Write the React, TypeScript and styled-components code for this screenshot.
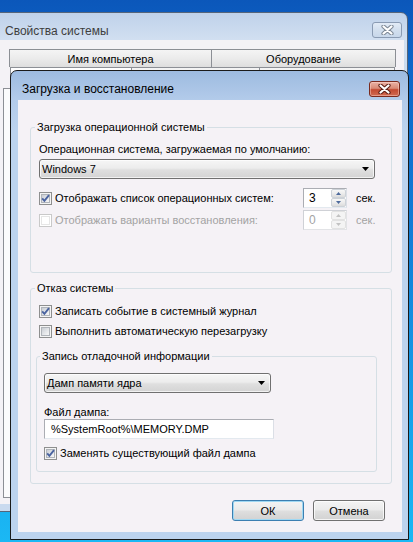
import React from "react";
import styled, { createGlobalStyle } from "styled-components";

const GlobalStyle = createGlobalStyle`
  html, body { margin: 0; padding: 0; }
  body {
    width: 413px;
    height: 542px;
    overflow: hidden;
    font-family: "Liberation Sans", Arial, sans-serif;
    font-size: 11px;
    line-height: 13px;
    color: #000;
    background: #1a9fe8;
  }
`;

const Desktop = styled.div`
  position: relative;
  width: 413px;
  height: 542px;
  overflow: hidden;
  background: linear-gradient(180deg, #0b57ba 0%, #0e66c8 12%, #127fd8 45%, #17a5ec 80%, #1bb8f4 100%);
`;

/* ---------- outer window: Свойства системы ---------- */
const OuterWindow = styled.div`
  position: absolute;
  left: -4px;
  top: 12px;
  width: 412px;
  height: 500px;
  box-sizing: border-box;
  border: 1px solid #56657a;
  border-radius: 0 7px 0 0;
  background: linear-gradient(180deg, #bfd2ea 0px, #d2e0f1 28px, #cadbef 60px, #c9daef 100%);
  display: flex;
  flex-direction: column;
`;

const OuterTitleBar = styled.div`
  height: 27px;
  flex: none;
  display: flex;
  align-items: flex-start;
  padding-left: 8px;
`;

const OuterTitle = styled.div`
  margin-top: 11px;
  font-size: 12px;
  line-height: 14px;
  color: #3e3e3e;
`;

const InactiveClose = styled.div`
  margin-left: auto;
  margin-right: 5px;
  margin-top: 9px;
  width: 30px;
  height: 16px;
  box-sizing: border-box;
  border: 1px solid #8a9bb3;
  border-radius: 3px;
  background: linear-gradient(180deg, #e2ebf6 0%, #d2dfee 50%, #c8d7ea 100%);
  display: grid;
  place-items: center;
`;

const OuterClient = styled.div`
  flex: 1;
  margin: 0 3px 7px 3px;
  background: #f4f2f6;
  padding: 9px 0 0 3px;
  display: flex;
  flex-direction: column;
`;

const TabRow = styled.div<{ $pad: number }>`
  display: flex;
  padding-left: ${(p) => p.$pad}px;
  flex: none;
`;

const Tab = styled.div<{ $w: number; $h: number; $selected?: boolean }>`
  width: ${(p) => p.$w}px;
  height: ${(p) => p.$h}px;
  box-sizing: border-box;
  border: 1px solid #8c8f95;
  border-bottom: none;
  background: ${(p) =>
    p.$selected ? "#ffffff" : "linear-gradient(180deg, #f4f4f4 0%, #ebebeb 50%, #dedede 100%)"};
  display: flex;
  align-items: center;
  justify-content: center;
  font-size: 11px;
  padding-top: 1px;
  & + & {
    border-left: none;
  }
`;

const TabPanel = styled.div`
  flex: 1;
  margin-right: 7px;
  margin-bottom: 6px;
  border: 1px solid #8c8f95;
  background: #fbfbfc;
`;

/* ---------- dialog: Загрузка и восстановление ---------- */
const Dialog = styled.div`
  position: absolute;
  left: 10px;
  top: 70px;
  width: 399px;
  height: 470px;
  box-sizing: border-box;
  border: 1px solid #1a1a1a;
  border-radius: 7px 7px 0 0;
  background: linear-gradient(180deg, #9dbbe0 0px, #b3cbea 29px, #bcd3ee 60px, #bcd3ee 100%);
  display: flex;
  flex-direction: column;
`;

const DialogTitleBar = styled.div`
  height: 29px;
  flex: none;
  display: flex;
  align-items: flex-start;
  padding-left: 11px;
`;

const DialogTitle = styled.div`
  margin-top: 11px;
  font-size: 12px;
  line-height: 14px;
  color: #000;
`;

const RedClose = styled.div`
  margin-left: auto;
  margin-right: 8px;
  margin-top: 10px;
  width: 31px;
  height: 16px;
  box-sizing: border-box;
  border: 1px solid #7a2a1e;
  border-radius: 3px;
  background: linear-gradient(180deg, #eab3a6 0%, #d98a76 45%, #c34a31 55%, #d06a52 100%);
  box-shadow: inset 0 0 0 1px rgba(255, 220, 210, 0.45);
  display: grid;
  place-items: center;
`;

const DialogClient = styled.div`
  flex: 1;
  margin: 0 6px 7px 7px;
  background: #f5f2f6;
  padding-top: 21px;
  display: flex;
  flex-direction: column;
`;

const Group = styled.fieldset<{ $pad: number; $w?: number; $mt?: number; $ml?: number; $pb: number }>`
  margin: ${(p) => p.$mt ?? 0}px 0 0 ${(p) => p.$ml ?? 0}px;
  ${(p) => (p.$w ? `width: ${p.$w}px;` : "")}
  box-sizing: border-box;
  border: 1px solid #d5dfe5;
  border-radius: 3px;
  padding: 0 0 ${(p) => p.$pb}px ${(p) => p.$pad}px;
  min-width: 0;
  display: flex;
  flex-direction: column;
  align-items: flex-start;
`;

const Legend = styled.legend`
  padding: 0 2px;
  margin-left: -4px;
  font-size: 11px;
  line-height: 13px;
`;

const Label = styled.div<{ $mt: number; $disabled?: boolean }>`
  margin-top: ${(p) => p.$mt}px;
  line-height: 13px;
  color: ${(p) => (p.$disabled ? "#a3a3a3" : "#000")};
  white-space: nowrap;
`;

const Combo = styled.div<{ $w: number; $mt: number }>`
  margin-top: ${(p) => p.$mt}px;
  width: ${(p) => p.$w}px;
  height: 20px;
  box-sizing: border-box;
  border: 1px solid #707070;
  border-radius: 3px;
  background: linear-gradient(180deg, #f6f6f6 0%, #ececec 45%, #dfdfdf 55%, #d3d3d3 100%);
  box-shadow: inset 0 0 0 1px rgba(255, 255, 255, 0.7);
  display: flex;
  align-items: center;
  padding: 0 5px 0 2px;
`;

const ComboText = styled.span`
  flex: 1;
  white-space: nowrap;
`;

const CheckRow = styled.div<{ $mt: number }>`
  margin-top: ${(p) => p.$mt}px;
  height: 20px;
  display: flex;
  align-items: center;
`;

const SpinRow = styled.div<{ $mt: number }>`
  margin-top: ${(p) => p.$mt}px;
  height: 20px;
  display: grid;
  grid-template-columns: 264px 44px auto;
  align-items: center;
`;

const CheckLabel = styled.label<{ $disabled?: boolean }>`
  display: flex;
  align-items: center;
  gap: 3px;
  white-space: nowrap;
  color: ${(p) => (p.$disabled ? "#a3a3a3" : "#000")};
`;

const Box = styled.span<{ $disabled?: boolean }>`
  position: relative;
  flex: none;
  width: 13px;
  height: 13px;
  box-sizing: border-box;
  border: 1px solid ${(p) => (p.$disabled ? "#c9c9c9" : "#8e8f8f")};
  background: ${(p) => (p.$disabled ? "#ffffff" : "#f4f4f4")};
  display: grid;
  place-items: center;
`;

const BoxInner = styled.span<{ $disabled?: boolean }>`
  width: 9px;
  height: 9px;
  box-sizing: border-box;
  border: 1px solid ${(p) => (p.$disabled ? "#e6e6e6" : "#b0b4ba")};
  background: ${(p) =>
    p.$disabled ? "#ffffff" : "linear-gradient(135deg, #c9cdd3 0%, #e4e6e9 55%, #f7f7f7 100%)"};
`;

const CheckSvg = styled.svg`
  position: absolute;
  left: 0;
  top: 0;
  width: 11px;
  height: 11px;
`;

const Spinner = styled.div<{ $disabled?: boolean }>`
  width: 44px;
  height: 20px;
  box-sizing: border-box;
  border: 1px solid ${(p) => (p.$disabled ? "#cfd1d6" : "#abadb3")};
  border-bottom-color: ${(p) => (p.$disabled ? "#e2e3e6" : "#e3e9ef")};
  border-right-color: ${(p) => (p.$disabled ? "#e2e3e6" : "#dbdfe6")};
  background: #fff;
  display: flex;
  align-items: center;
  padding: 0 0 0 5px;
  color: ${(p) => (p.$disabled ? "#a3a3a3" : "#000")};
  font-size: 12px;
`;

const SpinValue = styled.span`
  flex: 1;
`;

const SpinButtons = styled.div`
  width: 15px;
  height: 18px;
  display: flex;
  flex-direction: column;
`;

const SpinBtn = styled.div<{ $disabled?: boolean }>`
  flex: 1;
  box-sizing: border-box;
  border: 1px solid ${(p) => (p.$disabled ? "#e2e2e2" : "#cdd2d8")};
  border-radius: 2px;
  background: ${(p) =>
    p.$disabled ? "#f4f4f4" : "linear-gradient(180deg, #f7f7f7 0%, #ececec 50%, #dcdcdc 100%)"};
  display: grid;
  place-items: center;
`;

const Sec = styled.span<{ $disabled?: boolean }>`
  margin-left: 9px;
  color: ${(p) => (p.$disabled ? "#a3a3a3" : "#000")};
`;

const TextBox = styled.div<{ $w: number }>`
  width: ${(p) => p.$w}px;
  height: 20px;
  box-sizing: border-box;
  border: 1px solid #abadb3;
  border-bottom-color: #e3e9ef;
  border-right-color: #dbdfe6;
  background: #fff;
  display: flex;
  align-items: center;
  padding-left: 6px;
  white-space: nowrap;
`;

const ButtonRow = styled.div`
  margin-top: 16px;
  display: flex;
  justify-content: flex-end;
  gap: 9px;
  padding-right: 17px;
`;

const Button = styled.button<{ $default?: boolean }>`
  width: 72px;
  height: 21px;
  box-sizing: border-box;
  border: 1px solid ${(p) => (p.$default ? "#3c7fb1" : "#707070")};
  border-radius: 3px;
  background: linear-gradient(180deg, #f4f4f4 0%, #ebebeb 45%, #dedede 55%, #d2d2d2 100%);
  box-shadow: ${(p) =>
    p.$default ? "inset 0 0 0 1px #9fd8f3" : "inset 0 0 0 1px rgba(255,255,255,0.75)"};
  font-family: "Liberation Sans", Arial, sans-serif;
  font-size: 11px;
  color: #000;
  padding: 0;
  display: grid;
  place-items: center;
`;

/* ---------- small drawings ---------- */
const CloseGlyph: React.FC<{ outline: string }> = ({ outline }) => (
  <svg width="13" height="10" viewBox="0 0 13 10">
    <path d="M2.5 1.5 L10.5 8.5 M10.5 1.5 L2.5 8.5" stroke={outline} strokeWidth="4.2" strokeLinecap="round" fill="none" />
    <path d="M2.5 1.5 L10.5 8.5 M10.5 1.5 L2.5 8.5" stroke="#ffffff" strokeWidth="2.2" strokeLinecap="round" fill="none" />
  </svg>
);

const ComboArrow = () => (
  <svg width="7" height="4" viewBox="0 0 7 4">
    <polygon points="0,0 7,0 3.5,4" fill="#000" />
  </svg>
);

const SpinArrow: React.FC<{ up?: boolean; disabled?: boolean }> = ({ up, disabled }) => (
  <svg width="5" height="3" viewBox="0 0 5 3">
    <polygon points={up ? "0,3 5,3 2.5,0" : "0,0 5,0 2.5,3"} fill={disabled ? "#c2c2c2" : "#4d6a9c"} />
  </svg>
);

const Checkbox: React.FC<{ checked?: boolean; disabled?: boolean }> = ({ checked, disabled }) => (
  <Box $disabled={disabled}>
    <BoxInner $disabled={disabled} />
    {checked && (
      <CheckSvg viewBox="0 0 11 11">
        <path d="M2.2 5.4 L4.4 7.8 L9 2.2" stroke="#4a63a0" strokeWidth="1.9" fill="none" />
      </CheckSvg>
    )}
  </Box>
);

const Spin: React.FC<{ value: string; disabled?: boolean }> = ({ value, disabled }) => (
  <Spinner $disabled={disabled}>
    <SpinValue>{value}</SpinValue>
    <SpinButtons>
      <SpinBtn $disabled={disabled}>
        <SpinArrow up disabled={disabled} />
      </SpinBtn>
      <SpinBtn $disabled={disabled}>
        <SpinArrow disabled={disabled} />
      </SpinBtn>
    </SpinButtons>
  </Spinner>
);

export default function App() {
  return (
    <>
      <GlobalStyle />
      <Desktop>
        <OuterWindow>
          <OuterTitleBar>
            <OuterTitle>Свойства системы</OuterTitle>
            <InactiveClose>
              <CloseGlyph outline="#7d8896" />
            </InactiveClose>
          </OuterTitleBar>
          <OuterClient>
            <TabRow $pad={6}>
              <Tab $w={203} $h={18}>Имя компьютера</Tab>
              <Tab $w={184} $h={18}>Оборудование</Tab>
            </TabRow>
            <TabRow $pad={7}>
              <Tab $w={122} $h={21} $selected />
              <Tab $w={128} $h={21} />
              <Tab $w={135} $h={21} />
            </TabRow>
            <TabPanel />
          </OuterClient>
        </OuterWindow>

        <Dialog>
          <DialogTitleBar>
            <DialogTitle>Загрузка и восстановление</DialogTitle>
            <RedClose>
              <CloseGlyph outline="#5b1d14" />
            </RedClose>
          </DialogTitleBar>
          <DialogClient>
            <Group $pad={8} $w={362} $ml={12} $pb={42}>
              <Legend>Загрузка операционной системы</Legend>
              <Label $mt={9}>Операционная система, загружаемая по умолчанию:</Label>
              <Combo $w={336} $mt={3}>
                <ComboText>Windows 7</ComboText>
                <ComboArrow />
              </Combo>
              <SpinRow $mt={9}>
                <CheckLabel>
                  <Checkbox checked />
                  Отображать список операционных систем:
                </CheckLabel>
                <Spin value="3" />
                <Sec>сек.</Sec>
              </SpinRow>
              <SpinRow $mt={2}>
                <CheckLabel $disabled>
                  <Checkbox disabled />
                  Отображать варианты восстановления:
                </CheckLabel>
                <Spin value="0" disabled />
                <Sec $disabled>сек.</Sec>
              </SpinRow>
            </Group>

            <Group $pad={8} $w={362} $ml={12} $mt={9} $pb={11}>
              <Legend>Отказ системы</Legend>
              <CheckRow $mt={6}>
                <CheckLabel>
                  <Checkbox checked />
                  Записать событие в системный журнал
                </CheckLabel>
              </CheckRow>
              <CheckRow $mt={0}>
                <CheckLabel>
                  <Checkbox />
                  Выполнить автоматическую перезагрузку
                </CheckLabel>
              </CheckRow>

              <Group $pad={7} $w={341} $ml={-3} $mt={9} $pb={8}>
                <Legend>Запись отладочной информации</Legend>
                <Combo $w={227} $mt={10}>
                  <ComboText>Дамп памяти ядра</ComboText>
                  <ComboArrow />
                </Combo>
                <Label $mt={13}>Файл дампа:</Label>
                <TextBox $w={230}>%SystemRoot%\MEMORY.DMP</TextBox>
                <CheckRow $mt={4}>
                  <CheckLabel>
                    <Checkbox checked />
                    Заменять существующий файл дампа
                  </CheckLabel>
                </CheckRow>
              </Group>
            </Group>

            <ButtonRow>
              <Button $default>ОК</Button>
              <Button>Отмена</Button>
            </ButtonRow>
          </DialogClient>
        </Dialog>
      </Desktop>
    </>
  );
}
